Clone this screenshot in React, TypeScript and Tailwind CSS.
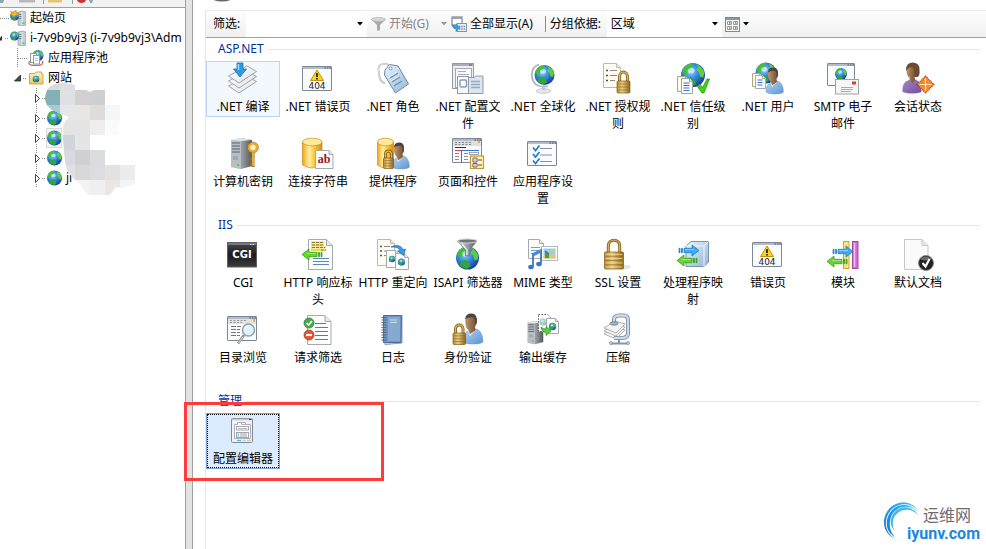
import { useState } from 'react';
import type { ReactNode } from 'react';

/* ---------- shared icon parts ---------- */

function SharedGradients() {
  return (
    <svg className="absolute h-0 w-0" aria-hidden="true">
      <defs>
        <radialGradient id="sea" cx="0.4" cy="0.35" r="0.7">
          <stop offset="0" stopColor="#8fd4ff" />
          <stop offset="0.45" stopColor="#3489e0" />
          <stop offset="1" stopColor="#16339f" />
        </radialGradient>
        <linearGradient id="gold" x1="0" x2="1">
          <stop offset="0" stopColor="#b98a2c" />
          <stop offset="0.4" stopColor="#ecd083" />
          <stop offset="1" stopColor="#91631a" />
        </linearGradient>
        <linearGradient id="drum" x1="0" x2="1">
          <stop offset="0" stopColor="#f0a818" />
          <stop offset="0.35" stopColor="#fff0a8" />
          <stop offset="0.6" stopColor="#fbc936" />
          <stop offset="1" stopColor="#dc8c0c" />
        </linearGradient>
        <linearGradient id="steel" x1="0" x2="1">
          <stop offset="0" stopColor="#e6e8ea" />
          <stop offset="0.5" stopColor="#9a9fa4" />
          <stop offset="1" stopColor="#55595e" />
        </linearGradient>
        <linearGradient id="pale" x1="0" y1="0" x2="1" y2="1">
          <stop offset="0" stopColor="#ffffff" />
          <stop offset="1" stopColor="#dfe5ea" />
        </linearGradient>
        <linearGradient id="shirt" x1="0" y1="0" x2="1" y2="1">
          <stop offset="0" stopColor="#b5d6f3" />
          <stop offset="1" stopColor="#5f94cf" />
        </linearGradient>
        <linearGradient id="plum" x1="0" y1="0" x2="1" y2="1">
          <stop offset="0" stopColor="#a58ac9" />
          <stop offset="1" stopColor="#6e4d9a" />
        </linearGradient>
        <linearGradient id="face" x1="0" x2="1">
          <stop offset="0" stopColor="#bf9468" />
          <stop offset="1" stopColor="#6f4c30" />
        </linearGradient>
        <linearGradient id="glass" x1="0" y1="0" x2="1" y2="1">
          <stop offset="0" stopColor="#eaf4fc" />
          <stop offset="1" stopColor="#93b5d6" />
        </linearGradient>
        <linearGradient id="coal" x1="0" y1="0" x2="0" y2="1">
          <stop offset="0" stopColor="#4b4b4b" />
          <stop offset="0.5" stopColor="#1c1c1c" />
          <stop offset="1" stopColor="#3c3c3c" />
        </linearGradient>
        <linearGradient id="tan" x1="0" y1="0" x2="0" y2="1">
          <stop offset="0" stopColor="#fdf3c8" />
          <stop offset="1" stopColor="#ecc562" />
        </linearGradient>
        <linearGradient id="swoosh" x1="0" y1="1" x2="1" y2="0">
          <stop offset="0" stopColor="#1478d4" />
          <stop offset="1" stopColor="#3cbcf4" />
        </linearGradient>
      </defs>
    </svg>
  );
}

function Globe({ x, y, r }: { x: number; y: number; r: number }) {
  return (
    <g transform={`translate(${x} ${y}) scale(${r / 10})`}>
      <circle r="10" fill="url(#sea)" />
      <path d="M-9-3.500Q-7-9-2-9.600L0-8.500-1.500-6.500-2-4-4.500-3-5-.500-7 0z" fill="#46bd3c" />
      <path d="M2.500-9Q8-7 9.500-2L8.500 2 6 1.500 5-2 2.500-4.500 4-6.500z" fill="#62cc3f" />
      <path d="M-6 3l4-1.500 4 3 .500 3L-1 9.500Q-5 8.500-7 6z" fill="#2fa838" />
      <ellipse cx="-1.500" cy="-3.500" rx="3" ry="2.300" fill="#f2fbff" opacity="0.6" />
    </g>
  );
}

function Page({ x, y, w, h, stroke = '#a5aaae', fill = '#fdfdfd', fold = 4 }: any) {
  return (
    <g stroke={stroke} strokeWidth="1" strokeLinejoin="round">
      <path d={`M${x} ${y}h${w - fold}l${fold} ${fold}v${h - fold}h${-w}z`} fill={fill} />
      <path d={`M${x + w - fold} ${y}v${fold}h${fold}`} fill="#e6e8ea" />
    </g>
  );
}

function Win({ x = 0.5, y = 4.5, w = 29, h = 24 }: any) {
  return (
    <g>
      <rect x={x} y={y} width={w} height={h} rx="0.500" fill="#fafbfc" stroke="#7d8795" />
      <rect x={x + 0.5} y={y + 0.5} width={w - 1} height="2" fill="#b3bdca" />
      <path d={`M${x + w - 7} ${y + 1.5}h1.500m1 0h1.500m1 0h1.500`} stroke="#3f4e66" strokeWidth="1" />
    </g>
  );
}

function Lock({ x, y, w, h, arch }: { x: number; y: number; w: number; h: number; arch: number }) {
  const l = x + w * 0.2;
  const r = x + w * 0.8;
  const lines = [0.25, 0.5, 0.75];
  return (
    <g>
      <path
        d={`M${l} ${y + 1}V${y - arch / 2}C${l} ${y - arch * 1.15} ${r} ${y - arch * 1.15} ${r} ${y - arch / 2}V${y + 1}`}
        fill="none" stroke="#85601b" strokeWidth="3"
      />
      <path
        d={`M${l} ${y + 1}V${y - arch / 2}C${l} ${y - arch * 1.15} ${r} ${y - arch * 1.15} ${r} ${y - arch / 2}V${y + 1}`}
        fill="none" stroke="#dcb65c" strokeWidth="1.300"
      />
      <rect x={x} y={y} width={w} height={h} rx="1" fill="url(#gold)" stroke="#80591a" strokeWidth="0.700" />
      {lines.map((f) => (
        <path key={f} d={`M${x + 1} ${y + h * f}h${w - 2}`} stroke="#926a22" strokeWidth="0.700" />
      ))}
    </g>
  );
}

function Person({ x, y }: { x: number; y: number }) {
  return (
    <g transform={`translate(${x} ${y})`}>
      <path d="M-7 18V15Q-6 10-2 8.500L5 7Q10 9 10.500 18Q9 20 2 20-5 20-7 18z" fill="url(#shirt)" stroke="#6c98c8" strokeWidth="0.500" />
      <path d="M-2.500 8.500L-1 13 4.500 7.500z" fill="#eef5fb" />
      <path d="M-5 0Q-5-5.500 0-5.500Q5-5.500 5 0Q5 3 3.500 5L4 8-1 11.500-2 8Q-5 6-5 0z" fill="url(#face)" />
      <path d="M-5-1.500Q-5-6.500 .5-6.500Q6-6.500 5 2L4 3Q4-1 2.500-3-2-4-5-1.500z" fill="#4a4542" />
    </g>
  );
}

function Arrow({ x, y, color, line, left = false }: any) {
  return (
    <g transform={`translate(${x} ${y}) scale(${left ? -1 : 1} 1)`} fill={color} stroke={line} strokeWidth="0.700">
      <path d="M0-2.200h1v4.400H0zM2.500-2.200h1v4.400h-1zM5-2.200h8v-3.300l7 5.500-7 5.500v-3.300H5z" />
      <path d="M6-1h9" stroke="#ffffff" opacity="0.55" fill="none" />
    </g>
  );
}

function Drum({ w }: { w: number }) {
  return (
    <g stroke="#cf8b14" strokeWidth="0.700">
      <path d={`M0.500 5V28Q${w / 2} 34 ${w} 28V5z`} fill="url(#drum)" />
      <ellipse cx={w / 2 + 0.25} cy="5" rx={w / 2 - 0.25} ry="3.800" fill="#ffe9a0" />
    </g>
  );
}

function Server({ x, y, s = 1 }: { x: number; y: number; s?: number }) {
  return (
    <g transform={`translate(${x} ${y}) scale(${s})`}>
      <path d="M0 2L10 0 21 2V28L10 31 0 29z" fill="url(#steel)" />
      <path d="M0 2L10 2V31L0 29z" fill="#b8bec4" />
      <path d="M1 5h8M1 8h8M1 11h8M1 14h8" stroke="#59646e" strokeWidth="1.200" />
      <path d="M0 2L10 0 21 2 10 3z" fill="#e2e5e8" />
      <path d="M2 19h5M2 21h5" stroke="#7f878e" strokeWidth="0.700" />
      <rect x="6" y="26" width="2" height="2" fill="#56d82a" />
    </g>
  );
}

function ErrorWindow() {
  return (
    <>
      <Win />
      <path d="M15 8L21.500 18.500H8.500z" fill="#fbd31e" stroke="#c39306" strokeLinejoin="round" />
      <path d="M15 11v4M15 16v1.500" stroke="#1c1c1c" strokeWidth="1.700" />
      <text x="15" y="27" textAnchor="middle" fontSize="9" fontFamily="DejaVu Sans, sans-serif" fill="#1b1b1b">404</text>
    </>
  );
}

/* ---------- feature icons ---------- */

const icons: Record<string, ReactNode> = {
  compile: (
    <>
      {[10, 5, 0].map((d) => (
        <path key={d} d={`M1.500 ${14 + d}L20 ${4 + d} 29.500 ${9.5 + d} 12 ${21 + d}z`} fill="url(#pale)" stroke="#979b9e" strokeWidth="0.900" />
      ))}
      <path d="M10 1h6v6h3.500L13 15 6.500 7H10z" fill="#2b9be4" stroke="#1a6fb2" strokeWidth="0.800" />
      <path d="M11.500 2v6" stroke="#a0dbff" strokeWidth="1.500" />
    </>
  ),
  error: <ErrorWindow />,
  roles: (
    <>
      <path d="M13 5C9-1 1 2 1.500 8 2 15 3 21 8 21" fill="none" stroke="#aeb4b9" strokeWidth="1.800" />
      <path d="M13 5C9-1 1 2 1.500 8 2 15 3 21 8 21" fill="none" stroke="#f5f6f7" strokeWidth="0.700" />
      <path d="M8 8L12.500 2.500 21 4 31.500 22 18.500 31 7.500 13z" fill="url(#glass)" stroke="#6b8ba6" strokeLinejoin="round" />
      <circle cx="13.500" cy="6.500" r="1.500" fill="#fff" stroke="#5c7186" strokeWidth="0.700" />
      <path d="M13 16l8-5M15 20l8-5M17 24l8-5" stroke="#6c90b7" strokeWidth="1.400" />
      <path d="M12 15l8-5M14 19l8-5" stroke="#fff" strokeWidth="0.700" />
    </>
  ),
  config: (
    <>
      <rect x="0.500" y="1.500" width="21" height="25" fill="#eceff2" stroke="#949ca4" />
      <path d="M1 3h20" stroke="#a6b0bb" strokeWidth="2" />
      <path d="M17 3h3" stroke="#56616d" />
      <rect x="3.500" y="6.500" width="16" height="19" fill="#f7f9fa" stroke="#a2abb3" />
      <path d="M6 9.500h8M6 12.500h11" stroke="#a2b0bd" />
      <path d="M14.500 15.500h8l1-1.500h7.500v17.500H14.500z" fill="#dde5ee" stroke="#8e9bab" />
      <rect x="5.500" y="14.500" width="11" height="17" fill="#f7f8f9" stroke="#9299a2" />
      <rect x="8" y="18" width="6.500" height="7" rx="1.500" fill="#fff" stroke="#899fb8" strokeWidth="1.500" />
      <path d="M19 19.500h9M19 22.500h9M19 25.500h9" stroke="#91a9c2" strokeWidth="1.300" />
    </>
  ),
  globalize: (
    <>
      <ellipse cx="16.500" cy="29" rx="7.500" ry="2.400" fill="#e3e5e7" stroke="#b9bdc0" strokeWidth="0.600" />
      <path d="M12 2.500C3 5 2 20 12 24l9 .5" fill="none" stroke="#adb2b7" strokeWidth="1.700" />
      <path d="M16.500 24v4" stroke="#bfc4c8" strokeWidth="3" />
      <Globe x={17.5} y={13} r={10} />
    </>
  ),
  rules: (
    <>
      <Page x={1.5} y={1.5} w={17} h={24} fill="#fffdf1" stroke="#c0baa2" />
      <path d="M4 8.500h2M4 13.500h2M4 18.500h2" stroke="#4c4c4c" strokeWidth="1.700" />
      <path d="M8 8.500h7M8 13.500h7M8 18.500h5" stroke="#888" />
      <Lock x={15} y={19} w={13} h={12} arch={9} />
    </>
  ),
  trust: (
    <>
      <Globe x={16} y={13} r={12} />
      <Page x={0.5} y={14.5} w={11} h={15} fill="#fffbe8" stroke="#aba58c" fold={3} />
      <Page x={4.5} y={16.5} w={11} h={15} stroke="#9ba3ac" fold={3} />
      <path d="M6.500 21h6M6.500 23.500h6M6.500 26h6M6.500 28.500h6" stroke="#3c70b9" />
      <path d="M20 24l3-2 2.500 3.500L30 17l2.500 0-5.500 14h-2z" fill="#3fd313" stroke="#239009" strokeWidth="0.700" />
    </>
  ),
  users: (
    <>
      <Globe x={14} y={11} r={10.500} />
      <Page x={0.5} y={11.5} w={9} h={13} fill="#fffbe9" stroke="#aba58c" fold={2} />
      <Page x={3.5} y={13.5} w={10} h={13} fold={3} />
      <path d="M5.500 18h5M5.500 20.500h5M5.500 23h5" stroke="#3c70b9" />
      <Person x={21} y={12} />
    </>
  ),
  smtp: (
    <>
      <Win x={0.5} y={1.5} w={27} h={22} />
      <Globe x={14} y={12} r={6} />
      <rect x="8.500" y="17.500" width="23" height="14.500" fill="#f6f6f6" stroke="#a2a2a2" />
      <rect x="25" y="19.500" width="4" height="3" fill="#dc3a34" />
      <path d="M14 25.500h12M14 27.500h12M14 29.500h10" stroke="#999" strokeWidth="0.800" />
    </>
  ),
  session: (
    <>
      <path d="M0.500 30V26Q1 20 7 18L14 17.500Q19 20 19.500 30Q10 33 0.500 30z" fill="url(#plum)" />
      <path d="M4 8Q4 .5 11 .5Q18 1 17.500 8Q18 14 15.500 15L11 15z" fill="#6b4a32" />
      <path d="M4.500 8Q7 5 9 5 13 5 13.500 9 13.500 13 12.500 14L13 18 10 22 7.500 18 7.500 15.500Q4.500 14 4.500 8z" fill="url(#face)" />
      <path d="M23.500 14l8.500 8.500-8.500 8.500-8.500-8.500z" fill="#f68b29" stroke="#8e3c10" strokeWidth="1.200" strokeDasharray="1 1" />
      <path d="M23.500 16.500v12M17.500 22.500h12" stroke="#ffe6bd" strokeWidth="1.200" />
    </>
  ),
  machineKey: (
    <>
      <Server x={4} y={1} />
      <circle cx="26" cy="10.500" r="4" fill="#fff5cf" stroke="#eaa92c" strokeWidth="2.600" />
      <circle cx="26" cy="10.500" r="5.500" fill="none" stroke="#a06e16" strokeWidth="0.600" />
      <path d="M26 16v14M26 22h-3M26 27h-3" stroke="#a66e18" strokeWidth="3" />
      <path d="M26 16v13" stroke="#ffd356" strokeWidth="1.300" />
    </>
  ),
  connection: (
    <>
      <Drum w={20} />
      <Page x={13.5} y={13.5} w={17.5} h={18} />
      <text x="22" y="26" textAnchor="middle" fontSize="12" fontWeight="700" fontFamily="Liberation Serif, serif" fill="#9c1420">ab</text>
    </>
  ),
  provider: (
    <>
      <Drum w={16.5} />
      <Person x={22} y={12} />
      <Lock x={6.5} y={21} w={10} h={10.5} arch={7} />
    </>
  ),
  pages: (
    <>
      <Win x={0.5} y={1.5} w={29} h={24} />
      <rect x="1" y="4" width="28" height="5" fill="#e0e0e0" />
      <path d="M3 5.500h17M3 7.500h17" stroke="#858585" strokeDasharray="2 1.500" />
      <rect x="26" y="4" width="2" height="2" fill="#f2a633" />
      <path d="M3 10.500h11" stroke="#333" />
      <path d="M3 13.500h6" stroke="#d94444" />
      <path d="M9.500 13.500v12M9 13.500h18" stroke="#3573da" strokeWidth="1" fill="none" />
      <path d="M3 16.500h4M3 19.500h4M3 22.500h4M12 16.500h4M12 19.500h4M12 22.500h4" stroke="#8b9097" />
      <rect x="17.500" y="15.500" width="9" height="2" fill="#fff" stroke="#7e838b" strokeWidth="0.700" />
      <rect x="18.500" y="19" width="13" height="12.500" fill="#fff6ad" stroke="#bd9e2d" strokeWidth="1.200" />
      <path d="M21 21h4v4h-4zM21 26.500h4v3.500h-4z" fill="#fff" stroke="#755183" />
      <path d="M22.500 23h1M22.500 28h1M26 23h4M26 28h4" stroke="#554673" />
    </>
  ),
  settings: (
    <>
      <Win />
      {[9, 15.5, 22].map((y) => (
        <g key={y}>
          <path d={`M6 ${y + 1.5}l2.500 3L12.500 ${y - 0.5}`} fill="none" stroke="#2b83c4" strokeWidth="1.800" />
          <path d={`M13 ${y + 2.500}h12`} stroke="#8593a1" />
        </g>
      ))}
    </>
  ),
  cgi: (
    <>
      <rect x="0.500" y="4.500" width="29" height="24.500" fill="url(#coal)" stroke="#626262" />
      <path d="M1 6h28" stroke="#858b93" strokeWidth="1.500" />
      <path d="M23 6.500h1.500m1 0h1.500" stroke="#e1e1e1" />
      <text x="15" y="20" textAnchor="middle" fontSize="10" fontWeight="700" fontFamily="DejaVu Sans, sans-serif" fill="#fff">CGI</text>
    </>
  ),
  headers: (
    <>
      <Page x={6.5} y={1.5} w={24} h={30} fold={6} />
      <path d="M9 4.500h13M9 7h13M9 9.500h15M9 12h15" stroke="#f0d94a" strokeWidth="2" />
      <path d="M10 4.500h12M10 7h12M10 9.500h13M19 12h5" stroke="#6f6425" strokeWidth="0.800" strokeDasharray="3 1" />
      <path d="M11 20.500h16M11 23.500h16M11 26.500h16" stroke="#5688c7" strokeWidth="1.200" />
      <Arrow x={20} y={16.500} color="#68d631" line="#27940f" left />
    </>
  ),
  redirect: (
    <>
      <Page x={0.5} y={1.5} w={17} h={26} fill="#fffdf1" stroke="#c0baa2" />
      <path d="M3 8.500h2M3 13h2M3 17.500h2" stroke="#555" strokeWidth="1.500" />
      <path d="M7 8.500h6M7 13h3M7 17.500h2" stroke="#888" />
      <Page x={9.5} y={12.5} w={13} h={17} />
      <Globe x={15} y={21} r={3.2} />
      <Page x={18.5} y={15.5} w={13} h={16} />
      <Globe x={24.5} y={24} r={3.6} />
      <path d="M14 9C20 6 25 8 26 12l2.500-1-2 6.500-6-4.500 2.500-.500C21 9 18 9 14 9z" fill="#3d9be8" stroke="#1b66a9" strokeWidth="0.700" />
    </>
  ),
  isapi: (
    <>
      <Globe x={15.5} y={20} r={11.500} />
      <path d="M5.500 3L13.500 12V18H17.500V12L25 3z" fill="url(#steel)" stroke="#6c7175" strokeWidth="0.700" />
      <ellipse cx="15.300" cy="3" rx="9.800" ry="2" fill="#707478" stroke="#d4d7d9" strokeWidth="1" />
      <path d="M10 6l5 6v5" fill="none" stroke="#fff" strokeWidth="1.300" opacity="0.8" />
    </>
  ),
  mime: (
    <>
      <Page x={1.5} y={1.5} w={15} h={19} />
      <path d="M4 9.500h9M4 12.500h7M4 15.500h6" stroke="#6f9fd2" />
      <rect x="14.500" y="8.500" width="16" height="14" fill="#fff" stroke="#b5b7b9" />
      <rect x="16.500" y="10.500" width="12" height="10" fill="#8bd3f4" />
      <path d="M16.500 20.500v-3l4-2 3 2 2-1 3 2v2z" fill="#e8c66a" />
      <circle cx="25.500" cy="13.500" r="1.800" fill="#f9c52b" />
      <path d="M18 20v-7l4 3v4z" fill="#4c9a4a" />
      <path d="M18 13l4 3" fill="none" stroke="#c2484b" strokeWidth="1.500" />
      <path d="M6 28V16L14 12V25" fill="none" stroke="#2766bb" strokeWidth="1.600" />
      <path d="M6 17l8-4" stroke="#4b8bda" strokeWidth="3" />
      <ellipse cx="4" cy="29" rx="2.800" ry="2.200" fill="#3775cb" />
      <ellipse cx="12" cy="26" rx="2.800" ry="2.200" fill="#3775cb" />
    </>
  ),
  ssl: (
    <>
      <ellipse cx="20" cy="29" rx="9" ry="2.500" fill="#e6e6e6" />
      <Lock x={2.500} y={14} w={19} h={17} arch={12} />
      <path d="M3.500 16.500h17M3.500 20.500h17M3.500 25h17M3.500 29h17" stroke="#f2da93" strokeWidth="0.700" />
    </>
  ),
  handlers: (
    <>
      <path d="M9 8L14 3.500H31.500V24L27 28.500H9z" fill="url(#glass)" stroke="#7995b1" />
      <path d="M9 8h18v20.500M27 8l4.500-4.500" fill="none" stroke="#f3f8fc" />
      <Arrow x={2} y={12.500} color="#3eabf2" line="#1875b4" />
      <Arrow x={20} y={22.500} color="#68d631" line="#27940f" left />
    </>
  ),
  modules: (
    <>
      <rect x="16.500" y="3.500" width="5.500" height="27" fill="#fbe477" stroke="#c9ab3a" />
      <rect x="25.500" y="3.500" width="5.500" height="27" fill="#d36bd2" stroke="#a04c9f" />
      <path d="M27.500 5v24" stroke="#f4bdf1" strokeWidth="1.500" />
      <Arrow x={6} y={13.500} color="#3eabf2" line="#1875b4" />
      <Arrow x={20} y={23.500} color="#68d631" line="#27940f" left />
    </>
  ),
  defaultDoc: (
    <>
      <Page x={2.5} y={1.5} w={23.500} h={30} fold={6} fill="#fafafa" stroke="#c5c8ca" />
      <circle cx="24" cy="25" r="7.500" fill="#222" stroke="#8a8a8a" />
      <path d="M18 21Q24 16 30 21Q24 24 18 21z" fill="#6b6b6b" />
      <path d="M20.500 25l3 3.500 4-7.500" fill="none" stroke="#fff" strokeWidth="2.200" />
    </>
  ),
  browse: (
    <>
      <Win x={0.5} y={3.5} w={29} h={24} />
      <rect x="1" y="6" width="28" height="5" fill="#e3e3e2" />
      <path d="M3 7.500h17M3 9.500h12" stroke="#999" strokeDasharray="2 1.500" />
      <rect x="26" y="6" width="2" height="3" fill="#f2ae35" />
      <path d="M4 13.500h10M4 16.500h9M4 19.500h9M4 22.500h9" stroke="#767676" strokeDasharray="5 1" />
      <path d="M17 22l-6 8.500" stroke="#9a928d" strokeWidth="2.600" />
      <path d="M16 24l-4.500 6" stroke="#ded7d1" strokeWidth="1" />
      <circle cx="21.500" cy="17" r="6" fill="#ddf1ff" stroke="#8da0b0" strokeWidth="1.500" />
      <path d="M17.500 16q1-3 4-3" fill="none" stroke="#fff" strokeWidth="1.500" />
    </>
  ),
  filtering: (
    <>
      <Page x={5.5} y={2.5} w={23.500} h={29} fold={6} />
      <path d="M13 10.500h11M13 14.500h13M13 18.500h13M13 22.500h13M13 26.500h13" stroke="#4a7fc4" />
      <circle cx="7" cy="10" r="5" fill="#4aa84c" stroke="#2f7d33" strokeWidth="0.800" />
      <path d="M4.500 10l2 2 3.500-4" fill="none" stroke="#fff" strokeWidth="1.600" />
      <circle cx="7" cy="22" r="5" fill="#e6532c" stroke="#b93a1b" strokeWidth="0.800" />
      <path d="M4 22h6" stroke="#fff" strokeWidth="2.200" />
    </>
  ),
  logs: (
    <>
      <path d="M7 2.500H25V30L8 31.500z" fill="#d7e1ea" stroke="#8d9cad" />
      <path d="M6.500 2.500H24.500L24 29.500H6.500z" fill="#6f95c4" stroke="#4a6d97" />
      <path d="M11 4h12v24H11z" fill="#86a9d1" />
      <path d="M13 7h7M13 9.500h7" stroke="#c7dcef" />
      <path d="M4.500 4.500h5M4.500 7h5M4.500 9.500h5M4.500 12h5M4.500 14.500h5M4.500 17h5M4.500 19.500h5M4.500 22h5M4.500 24.500h5M4.500 27h5" stroke="#596b80" strokeWidth="1.100" />
    </>
  ),
  auth: (
    <>
      <g transform="translate(19 8) scale(1.150)">
        <Person x={0} y={0} />
      </g>
      <Lock x={1} y={20} w={12.500} h={11.500} arch={8} />
    </>
  ),
  cache: (
    <>
      <Server x={0.5} y={8} s={0.75} />
      <path d="M11.500 1.500h9l3 3v14h-12z" fill="#fff" stroke="#555" strokeDasharray="1.500 1.500" />
      <g opacity="0.45">
        <Globe x={16} y={9} r={3.5} />
      </g>
      <Page x={19.500} y={5.500} w={12} h={15} fold={3} />
      <Globe x={25.500} y={13.500} r={3.7} />
      <path d="M14 14q2 2 5 2v-2.500l5 4.500-5 4.500v-3q-4 0-5-5.500z" fill="#5fcd3d" stroke="#2b9221" strokeWidth="0.700" />
    </>
  ),
  compress: (
    <>
      {[8, 5, 2].map((d) => (
        <path key={d} d={`M2 ${13 + d}L13 ${6 + d} 23 ${9 + d} 14 ${18 + d}z`} fill="#f3f3f2" stroke="#9a9d9f" strokeWidth="0.800" />
      ))}
      <path d="M12 10V7Q12 2.500 17 2.500H22Q26 2.500 26 7V20Q26 25 20 25H12" fill="none" stroke="#76899f" strokeWidth="4" />
      <path d="M12 10V7Q12 2.500 17 2.500H22Q26 2.500 26 7V20Q26 25 20 25H12" fill="none" stroke="#ccd9e8" strokeWidth="2.300" />
      <ellipse cx="12" cy="10.500" rx="4" ry="1.700" fill="#a8b5c5" stroke="#586b82" strokeWidth="0.700" />
      <path d="M17 26v4M8 30.500h18" stroke="#8494a6" strokeWidth="2" />
      <circle cx="9" cy="30" r="1.500" fill="#c7d0da" stroke="#697e98" strokeWidth="0.600" />
      <circle cx="26" cy="30" r="1.500" fill="#c7d0da" stroke="#697e98" strokeWidth="0.600" />
    </>
  ),
  editor: (
    <>
      <rect x="4.500" y="4.500" width="21" height="24" rx="1" fill="#f1f2f3" stroke="#85898d" />
      <path d="M5 5.500h20" stroke="#c6cacd" strokeWidth="1.500" />
      <path d="M22 5.500h2.500" stroke="#414950" />
      <path d="M7.500 24.500V10.500h3v-2h4v2h9v14z" fill="#fff" stroke="#abb0b7" />
      <path d="M14.500 8.500h4v2" fill="none" stroke="#abb0b7" />
      <rect x="9.500" y="12.500" width="12" height="3.500" fill="#fff" stroke="#a4a8b4" />
      <path d="M11 14.500h9" stroke="#bbb" />
      <rect x="9.500" y="18.500" width="12" height="5" fill="#fff" stroke="#a4a8b4" />
      <path d="M13 20h7M13 22h7" stroke="#a0a0a0" />
      <path d="M10.500 20h1.500M10.500 22h1.500" stroke="#2fa3bd" />
      <path d="M10 26.500h4" stroke="#26c9ee" strokeWidth="1.300" />
      <path d="M15.500 26.500h3M20 26.500h4" stroke="#c5c7c9" strokeWidth="1.300" />
    </>
  ),
};

/* ---------- data ---------- */

type Feature = { icon: string; label: string };
type Group = { title: string; features: Feature[] };

const groups: Group[] = [
  {
    title: 'ASP.NET',
    features: [
      { icon: 'compile', label: '.NET 编译' },
      { icon: 'error', label: '.NET 错误页' },
      { icon: 'roles', label: '.NET 角色' },
      { icon: 'config', label: '.NET 配置文件' },
      { icon: 'globalize', label: '.NET 全球化' },
      { icon: 'rules', label: '.NET 授权规则' },
      { icon: 'trust', label: '.NET 信任级别' },
      { icon: 'users', label: '.NET 用户' },
      { icon: 'smtp', label: 'SMTP 电子邮件' },
      { icon: 'session', label: '会话状态' },
      { icon: 'machineKey', label: '计算机密钥' },
      { icon: 'connection', label: '连接字符串' },
      { icon: 'provider', label: '提供程序' },
      { icon: 'pages', label: '页面和控件' },
      { icon: 'settings', label: '应用程序设置' },
    ],
  },
  {
    title: 'IIS',
    features: [
      { icon: 'cgi', label: 'CGI' },
      { icon: 'headers', label: 'HTTP 响应标头' },
      { icon: 'redirect', label: 'HTTP 重定向' },
      { icon: 'isapi', label: 'ISAPI 筛选器' },
      { icon: 'mime', label: 'MIME 类型' },
      { icon: 'ssl', label: 'SSL 设置' },
      { icon: 'handlers', label: '处理程序映射' },
      { icon: 'error', label: '错误页' },
      { icon: 'modules', label: '模块' },
      { icon: 'defaultDoc', label: '默认文档' },
      { icon: 'browse', label: '目录浏览' },
      { icon: 'filtering', label: '请求筛选' },
      { icon: 'logs', label: '日志' },
      { icon: 'auth', label: '身份验证' },
      { icon: 'cache', label: '输出缓存' },
      { icon: 'compress', label: '压缩' },
    ],
  },
  { title: '管理', features: [{ icon: 'editor', label: '配置编辑器' }] },
];

/* ---------- left tree ---------- */

function SmallServer({ start = false }: { start?: boolean }) {
  return (
    <svg viewBox="0 0 16 16" className="h-4 w-4 shrink-0">
      <path d="M8 2l4-1 4 1v13l-4 1-4-1z" fill="#c3cdd5" stroke="#7c8b97" strokeWidth="0.600" />
      <path d="M8.500 4.500h3.500M8.500 6.500h3.500M8.500 8.500h3.500" stroke="#5b6e7d" strokeWidth="0.800" />
      <path d="M12 2v13" stroke="#eef2f5" />
      <rect x="12.500" y="12.500" width="2" height="1.500" fill="#49cf30" />
      <Globe x={4.5} y={6} r={4.5} />
      {start && <path d="M0 1l3 1.500L6 0l.5 3 2.500 2-3 0L4 7 3 5 0 5l2-2z" fill="#f6b931" stroke="#c98310" strokeWidth="0.500" />}
    </svg>
  );
}

function PoolIcon() {
  return (
    <svg viewBox="0 0 16 16" className="h-4 w-4 shrink-0">
      <Globe x={10} y={5.5} r={5.5} />
      <path d="M1.500 11q-2 4 4 4.500h5q5-.5 4-4.500" fill="none" stroke="#d4675a" strokeWidth="1.300" />
      <rect x="2.500" y="3.500" width="6" height="9" fill="#fff" stroke="#8d9aa6" />
      <rect x="5.500" y="5.500" width="6" height="8.500" fill="#fff" stroke="#8d9aa6" />
      <path d="M7 8.500h3M7 10.500h3" stroke="#9fabb5" strokeWidth="0.700" />
    </svg>
  );
}

function SitesIcon() {
  return (
    <svg viewBox="0 0 16 16" className="h-4 w-4 shrink-0">
      <path d="M1.500 14V3.500H7l1-1.500h5.500v2H15V14z" fill="url(#tan)" stroke="#cfa74c" />
      <Globe x={8} y={9} r={3.3} />
    </svg>
  );
}

function SiteGlobe() {
  return (
    <svg viewBox="0 0 16 16" className="h-4 w-4 shrink-0">
      <Globe x={8.500} y={8} r={7.5} />
    </svg>
  );
}

function Lines({ kind }: { kind: 'root' | 'open' | 'child' | 'folder' | 'site' }) {
  const dash = { stroke: '#8a8a8a', strokeDasharray: '1 1', fill: 'none' };
  if (kind === 'root') {
    return <svg className="h-5 w-2.5 shrink-0"><path d="M0 10.500h9" {...dash} /></svg>;
  }
  if (kind === 'open') {
    return (
      <svg className="h-5 w-2.5 shrink-0">
        <path d="M2 7.500v5h-4z" fill="#333" />
        <path d="M5 10.500h4" {...dash} />
      </svg>
    );
  }
  if (kind === 'child') {
    return <svg className="h-5 w-7 shrink-0"><path d="M17.500 0v20M18 10.500h10" {...dash} /></svg>;
  }
  if (kind === 'folder') {
    return (
      <svg className="h-5 w-7 shrink-0">
        <path d="M20.500 7v6h-6z" fill="#4a4a4a" stroke="#222" strokeWidth="0.800" />
        <path d="M23 10.500h4" {...dash} />
      </svg>
    );
  }
  return (
    <svg className="h-5 w-[46px] shrink-0">
      <path d="M36.500 0v5M36.500 16v4M42 10.500h3" {...dash} />
      <path d="M35.500 6.500v8l4-4z" fill="#fff" stroke="#444" />
    </svg>
  );
}

function TreeRow({ kind, icon, text }: { kind: 'root' | 'open' | 'child' | 'folder' | 'site'; icon: ReactNode; text: string }) {
  return (
    <li>
      <button type="button" className="flex h-5 w-full items-center overflow-hidden whitespace-nowrap text-left">
        <Lines kind={kind} />
        {icon}
        <span className="ml-1">{text}</span>
      </button>
    </li>
  );
}

// [x, y, colour] of each 15px block laid over the site names
const blocks: [number, number, string][] = [
  [45, 75, '#d9dadb'], [60, 75, '#dedfe1'],
  [45, 90, '#83b1b7'], [60, 90, '#e0e1e3'], [75, 90, '#d2d1d0'], [90, 90, '#cecfd1'],
  [45, 105, '#a9cbd0'], [60, 105, '#e6e7e9'], [75, 105, '#e7e6e5'], [90, 105, '#dddcd9'], [105, 105, '#f5f6f8'],
  [60, 120, '#e4e4e5'], [75, 120, '#e4e4e4'], [90, 120, '#eeeeee'], [105, 120, '#fbfbfb'],
  [60, 135, '#d2d4db'], [75, 135, '#e5e5e5'],
  [60, 150, '#d9dae0'], [75, 150, '#d0d0d2'], [90, 150, '#dbdcde'],
  [60, 165, '#e0e0e4'], [75, 165, '#d9d7d8'], [90, 165, '#dddde0'], [105, 165, '#e3e1e2'], [120, 165, '#ebecee'],
  [75, 180, '#f2f2f3'], [90, 180, '#efeff0'], [105, 180, '#e8e7e5'], [120, 180, '#f3f4f6'],
];

function Mosaic() {
  return (
    <svg viewBox="0 0 140 200" shapeRendering="crispEdges" className="pointer-events-none absolute left-0 top-0 h-[200px] w-[140px]">
      <clipPath id="smudge">
        <path d="M45 98Q46 83 62 83Q70 83 75 85V90H86L90 92 94 90H105V105H120V123L117 135H90V150H105V165H135V184L123 188 116 187 110 195H88L80 184Q66 174 65 162L63 140V128Q64 121 69 117L60 114 52 110Q45 105 45 98z" />
      </clipPath>
      <g clipPath="url(#smudge)">
        {blocks.map(([x, y, fill]) => (
          <rect key={`${x}-${y}`} x={x} y={y} width="15" height="15" fill={fill} />
        ))}
      </g>
    </svg>
  );
}

function Sidebar() {
  return (
    <aside className="relative w-[185px] shrink-0 overflow-hidden bg-white">
      <div className="h-2 border-b border-[#a0a0a0] bg-[#f2f2f2]">
        <svg className="h-[7px] w-full">
          <path d="M0 0h4l-1 3H0z" fill="#8ba6b9" />
          <path d="M19 0h16v2.500H19z" fill="#b9b9b9" />
          <path d="M43.500 0v4M72.500 0v4" stroke="#9c9c9c" />
          <path d="M48 0h14v2.500H48z" fill="#e5c571" />
          <path d="M77 0h9q-1 3-4.500 3T77 0z" fill="#cf3333" />
          <path d="M89 0h4l-1 3h-2z" fill="#8ba6b9" />
        </svg>
      </div>
      <ul>
        <TreeRow kind="root" icon={<SmallServer start />} text="起始页" />
        <TreeRow kind="open" icon={<SmallServer />} text="i-7v9b9vj3 (i-7v9b9vj3\Adm" />
        <TreeRow kind="child" icon={<PoolIcon />} text="应用程序池" />
        <TreeRow kind="folder" icon={<SitesIcon />} text="网站" />
        <TreeRow kind="site" icon={<SiteGlobe />} text="" />
        <TreeRow kind="site" icon={<SiteGlobe />} text="" />
        <TreeRow
          kind="site"
          icon={<span className="flex h-5 items-center bg-[#f3f3f3] outline outline-[#d9d9d9] -outline-offset-1"><SiteGlobe /></span>}
          text=""
        />
        <TreeRow kind="site" icon={<SiteGlobe />} text="" />
        <TreeRow kind="site" icon={<SiteGlobe />} text="ji" />
      </ul>
      <Mosaic />
    </aside>
  );
}

/* ---------- toolbar ---------- */

function Caret({ muted = false }: { muted?: boolean }) {
  return (
    <svg viewBox="0 0 6 4" className="h-1 w-1.5 shrink-0">
      <path d="M0 0h6L3 3.500z" fill={muted ? '#9a9a9a' : '#000'} />
    </svg>
  );
}

function Toolbar() {
  const [filter, setFilter] = useState('');
  return (
    <div className="flex h-7 items-center whitespace-nowrap border-b border-t border-b-[#a0a0a0] border-t-[#ececec] bg-linear-to-b from-[#fdfdfd] to-[#f0f0f0] pl-[7px] leading-4">
      <label htmlFor="filter" className="w-[33px]">筛选:</label>
      <div className="flex h-full w-[121px] items-center bg-white pr-1">
        <input id="filter" value={filter} onChange={(e) => setFilter(e.target.value)} className="h-5 min-w-0 flex-1 bg-transparent px-1 outline-none" />
        <Caret />
      </div>
      <button type="button" className="ml-1 flex items-center gap-[3px] text-[#838383]">
        <svg viewBox="0 0 15 14" className="h-3.5 w-[15px]">
          <path d="M0.500 2.500L6 8v5.500h3V8l5.500-5.500z" fill="#aaa" />
          <ellipse cx="7.500" cy="2.500" rx="7" ry="2" fill="#d6d6d6" stroke="#aaa" strokeWidth="0.600" />
        </svg>
        开始(G)
      </button>
      <button type="button" aria-label="开始选项" className="ml-3 flex h-5 items-center"><Caret muted /></button>
      <button type="button" className="ml-1 flex items-center gap-[3px]">
        <svg viewBox="0 0 16 16" className="h-4 w-4">
          <rect x="1" y="1" width="10" height="8" fill="#fff" stroke="#7d8792" strokeWidth="1.200" />
          <path d="M1 2h10" stroke="#96a3b1" strokeWidth="2" />
          <rect x="6" y="7.500" width="9.500" height="8" fill="#e9eef4" stroke="#8792a0" />
          <path d="M8 10.500h6M8 13h6" stroke="#6f82b5" strokeWidth="1.300" strokeDasharray="1.300 1" />
          <path d="M1 9q1 4 4 4v2.500l4-4-4-3.500v2q-2 0-4-1z" fill="#35a0dd" stroke="#1d79b5" strokeWidth="0.500" />
        </svg>
        全部显示(A)
      </button>
      <div className="ml-3 mr-1 h-4 w-px bg-[#8c8c8c]" />
      <label htmlFor="group" className="w-[57px]">分组依据:</label>
      <div className="flex h-full w-[115px] items-center bg-white pr-1">
        <select id="group" className="h-5 min-w-0 flex-1 appearance-none bg-transparent px-1 outline-none">
          <option>区域</option>
        </select>
        <Caret />
      </div>
      <button type="button" aria-label="视图" className="ml-[3px] flex items-center gap-[3px]">
        <svg viewBox="0 0 15 15" className="h-[15px] w-[15px]">
          <rect x="0.500" y="0.500" width="14" height="14" fill="#fafafa" stroke="#7f8996" />
          <path d="M1 2h13" stroke="#8b96a6" strokeWidth="2" />
          <path d="M2.500 4.500h4v3h-4zM8.500 4.500h4v3h-4zM2.500 9.500h4v3h-4zM8.500 9.500h4v3h-4z" fill="#fff" stroke="#9a9a9a" />
          <path d="M4 6h1.500" stroke="#3f9a4b" strokeWidth="1.500" />
          <path d="M10 6h1.500" stroke="#3e8d60" strokeWidth="1.500" />
          <path d="M4 11h1.500" stroke="#d3602d" strokeWidth="1.500" />
          <path d="M10 11h1.500" stroke="#6258c9" strokeWidth="1.500" />
        </svg>
        <Caret />
      </button>
    </div>
  );
}

/* ---------- features ---------- */

function FeatureItem({ feature, hovered, selected, onSelect }: { feature: Feature; hovered: boolean; selected: boolean; onSelect: () => void }) {
  return (
    <button
      type="button"
      onClick={onSelect}
      className={`flex min-h-14 w-[74px] flex-col items-center gap-1 self-start border px-px pb-px leading-[17px] ${
        selected
          ? 'border-[#7da2ce] bg-[#dcebfd] outline-1 outline-dotted outline-black -outline-offset-2'
          : hovered
            ? 'border-[#b8d6fb] bg-[#f3f8fe]'
            : 'border-transparent'
      }`}
    >
      <svg viewBox="0 0 32 32" className="h-8 w-8 shrink-0 overflow-visible">{icons[feature.icon]}</svg>
      <span className="w-[70px] text-center">{feature.label}</span>
    </button>
  );
}

function Watermark() {
  return (
    <div className="absolute bottom-1.5 right-1.5 flex items-end">
      <svg viewBox="0 0 40 42" className="h-[42px] w-10">
        <path d="M35 9C25-2 5 3 3 20c-1 10 5 18 16 20C7 38 0 30 1 19 4 0 26-4 35 9z" fill="url(#swoosh)" />
        <path d="M35 11C25 1 9 6 7 20c-1 7 1 12 5 16C5 32 3 26 4 19 7 3 25-1 35 11z" fill="url(#swoosh)" />
        <path d="M36 15C27 4 12 9 10 20c-.500 5 0 7 2 10C8 26 7 23 8 18 12 4 28 2 36 15z" fill="#43b8ee" />
      </svg>
      <div className="-ml-4">
        <div className="ml-4 text-[16px] leading-[17px] text-[#6b6b73]">运维网</div>
        <div className="font-[Roboto,sans-serif] text-[16px] font-bold leading-[19px] text-[#1b86dc]">iyunv.com</div>
      </div>
    </div>
  );
}

export default function App() {
  const [selected, setSelected] = useState('配置编辑器');

  return (
    <div className="relative flex min-h-screen overflow-hidden bg-white font-['Noto_Sans','Noto_Sans_CJK_SC',sans-serif] text-[12px] text-black">
      <SharedGradients />
      <Sidebar />
      <div className="w-2 shrink-0 border-x border-[#a0a0a0] bg-[#e3e3e3]" />
      <main className="flex min-w-0 flex-1 flex-col pl-3">
        <div className="h-2.5">
          <svg className="h-1 w-10">
            <ellipse cx="17" cy="-3" rx="11" ry="4.500" fill="#666" />
          </svg>
        </div>
        <div className="flex-1 border-l border-[#e6e6e6]">
          <Toolbar />
          <div className="flex flex-col gap-[3px]">
            {groups.map((group) => (
              <section key={group.title} className="relative">
                <h2 className="mb-px flex h-[22px] items-center gap-1 pl-3 pr-1.5 leading-4 text-[#003399]">
                  {group.title}
                  <span className="h-px flex-1 bg-[#d9e8f5]" />
                </h2>
                <div className="grid auto-rows-[75px] grid-cols-[repeat(auto-fill,75px)]">
                  {group.features.map((f) => (
                    <FeatureItem
                      key={f.label}
                      feature={f}
                      hovered={f.icon === 'compile'}
                      selected={selected === f.label}
                      onSelect={() => setSelected(f.label)}
                    />
                  ))}
                </div>
                {group.title === '管理' && (
                  <div className="pointer-events-none absolute -left-[22px] top-3 h-[79px] w-[200px] border-3 border-[#ff3b3b]" />
                )}
              </section>
            ))}
          </div>
        </div>
      </main>
      <Watermark />
    </div>
  );
}
